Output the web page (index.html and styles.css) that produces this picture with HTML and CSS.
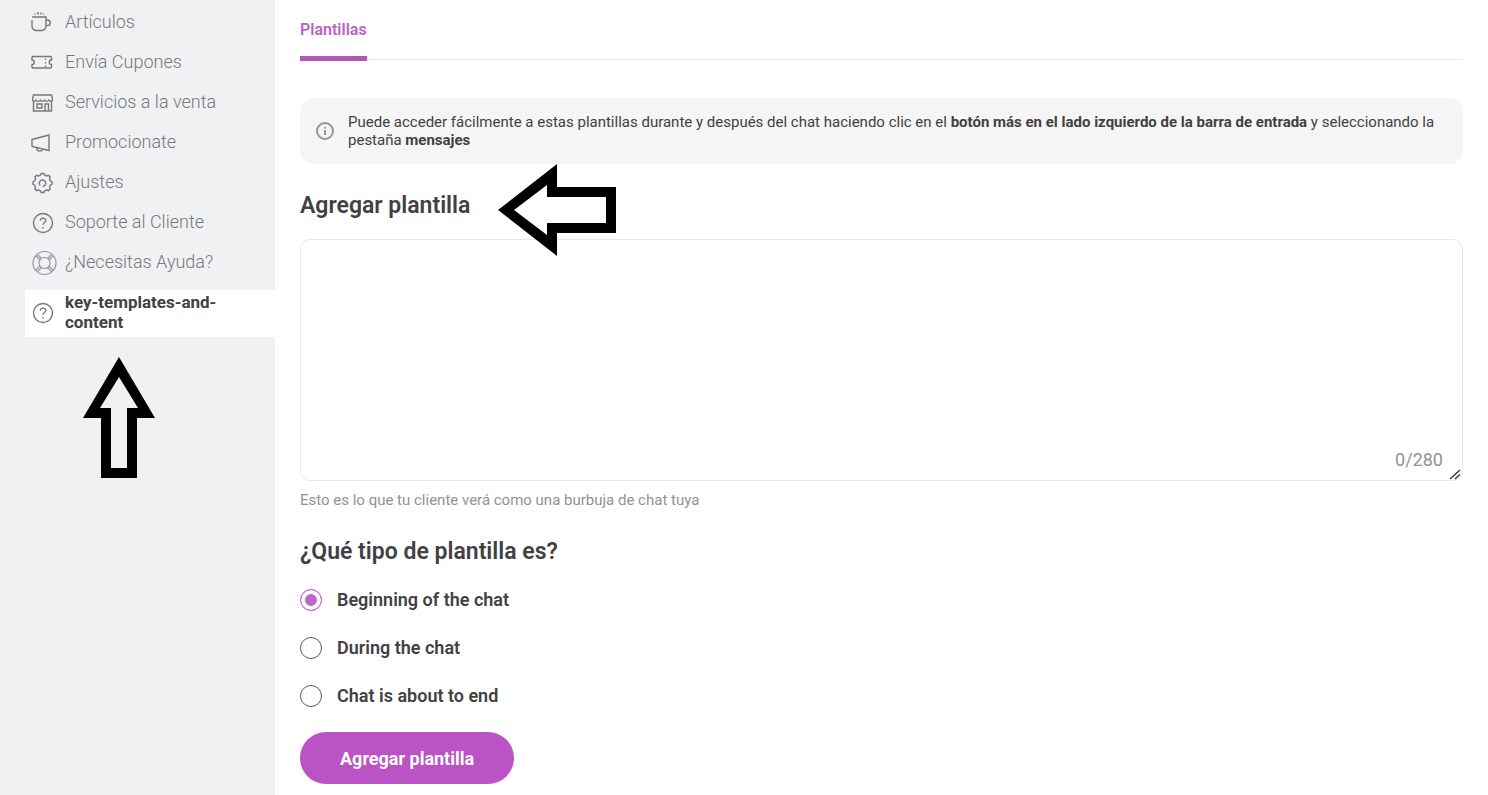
FILE: index.html
```html
<!DOCTYPE html>
<html lang="es">
<head>
    <meta charset="UTF-8">
    <meta name="viewport" content="width=device-width, initial-scale=1.0">
    <title>Plantillas</title>
    <link rel="stylesheet" href="styles.css">
</head>
<body>
    <div class="page">
        <aside class="sidebar">
            <nav class="menu">
                <a class="menu-item" href="#">
                    <svg class="icon" viewBox="0 0 24 24"><path d="M2 7h14v9a4.500 4.500 0 0 1-4.500 4.500h-5A4.500 4.500 0 0 1 2 16v-6M16 10h1.500a2.800 2.800 0 0 1 0 5.600H16M5 4.500V3.500M8 4.500V2M11 4.500V2.500M13.500 4.500v-1"/></svg>
                    <span>Artículos</span>
                </a>
                <a class="menu-item" href="#">
                    <svg class="icon" viewBox="0 0 24 24"><path d="M3 6.500h17.500a1 1 0 0 1 1 1V10a2.200 2.200 0 0 0 0 4.500v2.500a1 1 0 0 1-1 1H3a1 1 0 0 1-1-1v-2.500a2.200 2.200 0 0 0 0-4.500V7.500a1 1 0 0 1 1-1z"/><path stroke-dasharray="1.500 2" d="M15.500 8.500v8.500"/></svg>
                    <span>Envía Cupones</span>
                </a>
                <a class="menu-item" href="#">
                    <svg class="icon" viewBox="0 0 24 24"><path d="M3.500 5h18l1 4c0 3-3.500 3-3.700.5-.3 2.500-4 2.500-4.200 0-.3 2.500-4 2.500-4.200 0-.3 2.500-4 2.500-4.200 0C5.900 12 2.500 12 2.500 9zM3.500 11.500v9.500h18v-9.500M7 14h5v4H7zM15 21v-7h3.500v7"/></svg>
                    <span>Servicios a la venta</span>
                </a>
                <a class="menu-item" href="#">
                    <svg class="icon" viewBox="0 0 24 24"><path d="M2 9.500 19 5v15.500L2 16.500zM7 18a2.500 2 0 0 0 5.500 1.500"/></svg>
                    <span>Promocionate</span>
                </a>
                <a class="menu-item" href="#">
                    <svg class="icon" viewBox="0 0 24 24"><path d="m10.300 5.200 1-1.700h2.400l1 1.700 1.800.8 2-.6 1.600 1.600-.6 2 .8 1.800 1.700 1v2.400l-1.700 1-.8 1.800.6 2-1.600 1.600-2-.6-1.800.8-1 1.700h-2.400l-1-1.700-1.800-.8-2 .6-1.600-1.600.6-2-.8-1.800-1.700-1v-2.400l1.700-1 .8-1.800-.6-2 1.600-1.600 2 .6z"/><path d="M10.300 15.500a3.200 3.200 0 1 1 2.200.9"/></svg>
                    <span>Ajustes</span>
                </a>
                <a class="menu-item" href="#">
                    <svg class="icon" viewBox="0 0 24 24"><circle cx="13" cy="13" r="9.500"/><path d="M10.300 10.800c0-3.500 5.500-3.500 5.500-.3 0 2-2.800 2-2.800 4.300M13 17v1.400"/></svg>
                    <span>Soporte al Cliente</span>
                </a>
                <a class="menu-item" href="#">
                    <svg class="icon icon-help" viewBox="0 0 24 24"><circle cx="14.500" cy="13" r="11.500"/><circle cx="14.500" cy="13" r="5.500"/><path d="m6 6 4 4M7.500 4.500l4 4M23 6l-4 4M21.500 4.500l-4 4M6 20l4-4M7.500 21.500l4-4M23 20l-4-4M21.500 21.500l-4-4"/></svg>
                    <span>¿Necesitas Ayuda?</span>
                </a>
                <a class="menu-item active" href="#">
                    <svg class="icon" viewBox="0 0 24 24"><circle cx="13" cy="13" r="9.500"/><path d="M10.300 10.800c0-3.500 5.500-3.500 5.500-.3 0 2-2.800 2-2.800 4.300M13 17v1.400"/></svg>
                    <span>key-templates-and-content</span>
                </a>
            </nav>
            <svg class="arrow arrow-up" viewBox="0 0 72 122"><path fill-rule="evenodd" d="M36 0 72 61H54v60H18V61H0zM36 20 17 51h11v60h16V51h11z"/></svg>
        </aside>

        <main class="content">
            <div class="tabs">
                <a class="tab" href="#">Plantillas</a>
            </div>

            <div class="notice">
                <svg class="notice-icon" viewBox="0 0 20 20"><circle cx="10" cy="10" r="8"/><path d="M10 9v5M10 6v1.500"/></svg>
                <p>Puede acceder fácilmente a estas plantillas durante y después del chat haciendo clic en el <b>botón más en el lado izquierdo de la barra de entrada</b> y seleccionando la pestaña <b>mensajes</b></p>
            </div>

            <form id="templateForm">
                <h2><label for="template">Agregar plantilla</label></h2>
                <div class="editor">
                    <textarea id="template" maxlength="280"></textarea>
                    <span class="counter" id="counter">0/280</span>
                    <svg class="grip" viewBox="0 0 12 12"><path d="M1 11 11 2M6 11l5-4.500"/></svg>
                </div>
                <p class="hint">Esto es lo que tu cliente verá como una burbuja de chat tuya</p>

                <h2>¿Qué tipo de plantilla es?</h2>
                <div class="options">
                    <label class="option"><input type="radio" name="type" value="begin" checked>Beginning of the chat</label>
                    <label class="option"><input type="radio" name="type" value="during">During the chat</label>
                    <label class="option"><input type="radio" name="type" value="end">Chat is about to end</label>
                </div>

                <button type="submit">Agregar plantilla</button>
            </form>
            <svg class="arrow arrow-left" viewBox="0 0 118 92"><path fill-rule="evenodd" d="M0 46 59 0v23h59v46H59v23zM16 46l33 25V59h59V33H49V21z"/></svg>
        </main>
    </div>

    <script>
        const template = document.getElementById('template');

        template.addEventListener('input', function() {
            document.getElementById('counter').textContent = template.value.length + '/280';
        });

        document.getElementById('templateForm').addEventListener('submit', function(e) {
            e.preventDefault();
        });
    </script>
</body>
</html>
```

FILE: styles.css
```css
* {
    box-sizing: border-box;
}
body {
    font-family: Roboto, "Liberation Sans", sans-serif;
    margin: 0;
    color: #414143;
    background-color: white;
}
.page {
    display: flex;
    min-height: 100vh;
}
.sidebar {
    position: relative;
    flex: 0 0 275px;
    padding: 2px 0 0 25px;
    background-color: #f0f1f3;
}
.menu {
    display: flex;
    flex-direction: column;
}
.menu-item {
    display: flex;
    align-items: center;
    gap: 11px;
    height: 40px;
    padding-left: 5px;
    color: #77787b;
    font-size: 18px;
    font-weight: 300;
    line-height: 20px;
    text-decoration: none;
}
.menu-item.active {
    height: auto;
    margin-top: 8px;
    padding: 2px 50px 5px 5px;
    background-color: white;
    color: #414143;
    font-size: 17px;
    font-weight: 700;
}
.icon {
    flex: none;
    width: 24px;
    height: 24px;
    overflow: visible;
    fill: none;
    stroke: #77787b;
    stroke-width: 1.4;
}
.icon-help {
    stroke: #9a94a8;
    stroke-width: 1.2;
}
.arrow {
    position: absolute;
    fill: black;
}
.arrow-up {
    top: 357px;
    left: 83px;
    width: 72px;
    height: 122px;
}
.arrow-left {
    top: 164px;
    left: 223px;
    width: 118px;
    height: 92px;
}
.content {
    position: relative;
    flex: 1;
    padding: 0 25px 11px;
}
.tabs {
    display: flex;
    height: 60px;
    border-bottom: 1px solid #e8e8ea;
}
.tab {
    height: 61px;
    padding-top: 20px;
    border-bottom: 5px solid #b455b8;
    color: #b964c4;
    font-size: 16px;
    font-weight: 600;
    line-height: 20px;
    text-decoration: none;
}
.notice {
    display: flex;
    align-items: center;
    gap: 13px;
    margin-top: 38px;
    padding: 15px;
    border-radius: 14px;
    background-color: #f5f5f5;
}
.notice p {
    margin: 0;
    font-size: 15px;
    line-height: 18px;
}
.notice b {
    font-weight: 700;
}
.notice-icon {
    flex: none;
    width: 20px;
    height: 20px;
    fill: none;
    stroke: #96939e;
    stroke-width: 2;
}
h2 {
    margin: 28px 0 19px;
    font-size: 23px;
    font-weight: 600;
    line-height: 28px;
}
.editor {
    position: relative;
    display: flex;
}
textarea {
    flex: 1;
    height: 242px;
    padding: 16px;
    border: 1px solid #e8e8ea;
    border-radius: 10px;
    outline: none;
    font-family: inherit;
    font-size: 17px;
    resize: none;
}
.counter {
    position: absolute;
    right: 20px;
    bottom: 11px;
    color: #929294;
    font-size: 18px;
    line-height: 20px;
}
.grip {
    position: absolute;
    right: 2px;
    bottom: 1px;
    width: 12px;
    height: 12px;
    fill: none;
    stroke: #3d3d3f;
    stroke-width: 1.5;
}
.hint {
    margin: 9px 0 0;
    color: #929294;
    font-size: 15px;
    line-height: 20px;
}
.options {
    display: flex;
    flex-direction: column;
    gap: 24px;
    padding-top: 3px;
}
.option {
    display: flex;
    align-items: center;
    gap: 15px;
    font-size: 18px;
    font-weight: 600;
    line-height: 24px;
}
.option input {
    appearance: none;
    width: 22px;
    height: 22px;
    margin: 0;
    border: 1px solid #58585a;
    border-radius: 50%;
    background-color: white;
}
.option input:checked {
    border-color: #c065cc;
    background-color: #c065cc;
    box-shadow: inset 0 0 0 4px white;
}
button {
    display: block;
    height: 52px;
    margin-top: 24px;
    padding: 0 40px;
    border: none;
    border-radius: 26px;
    background-color: #bb52c6;
    color: white;
    font-family: inherit;
    font-size: 18px;
    font-weight: 700;
    cursor: pointer;
}
button:hover {
    background-color: #a846b3;
}
```
